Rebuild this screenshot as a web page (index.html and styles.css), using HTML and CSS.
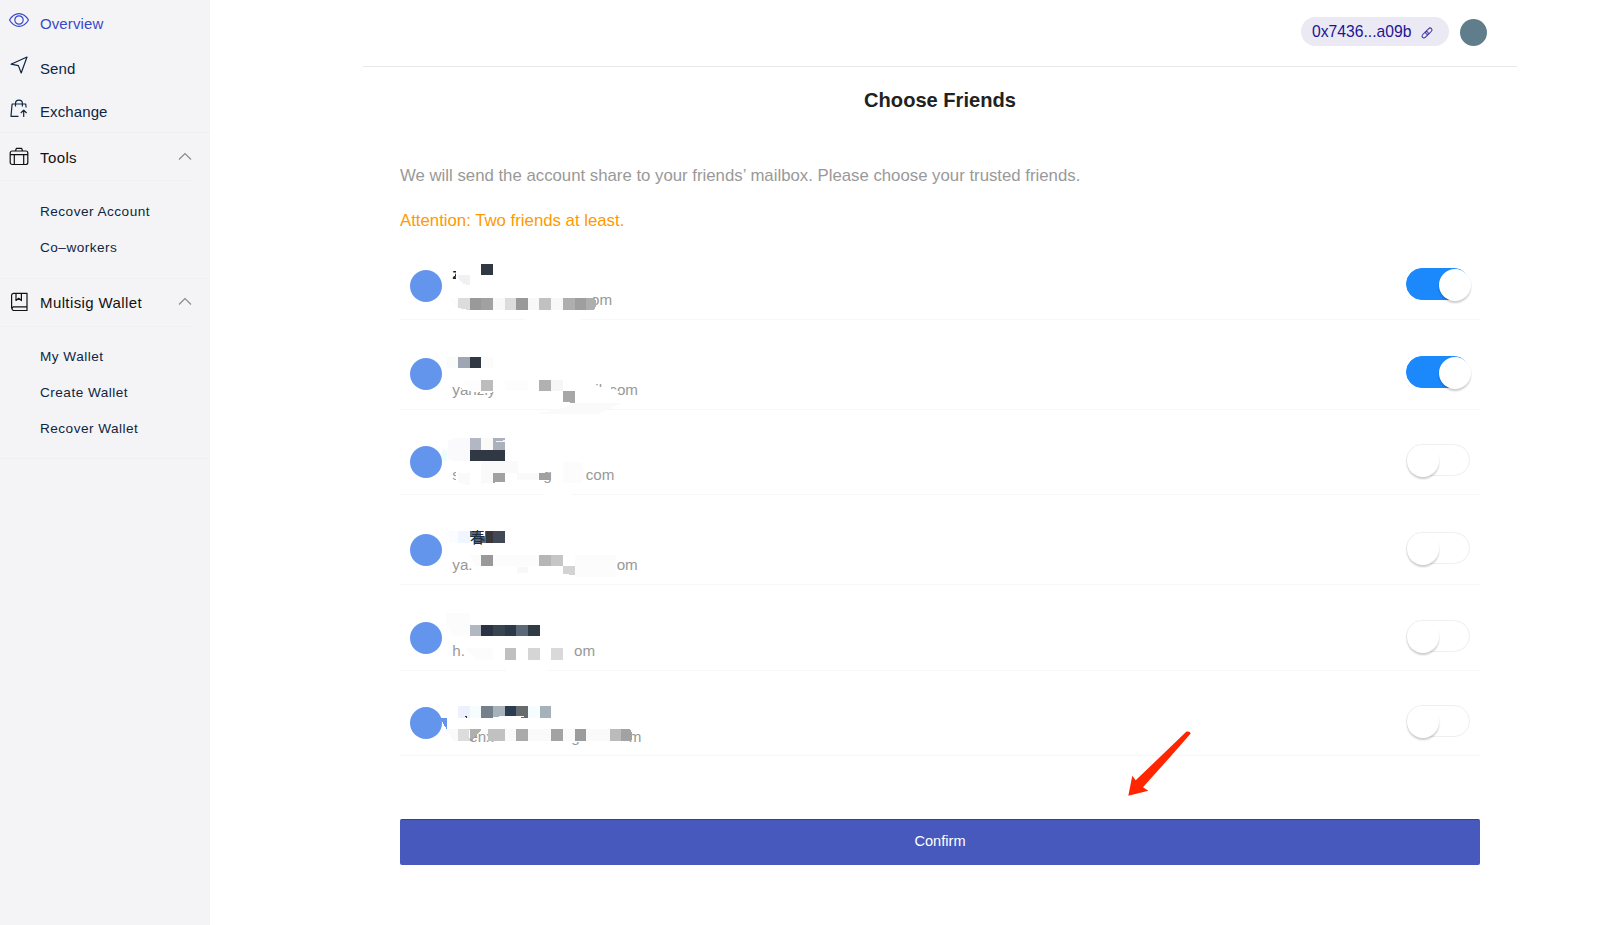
FILE: index.html
```html
<!DOCTYPE html>
<html lang="en">
<head>
<meta charset="utf-8">
<title>Choose Friends</title>
<link rel="stylesheet" href="styles.css">
</head>
<body>
<div class="app">
  <nav class="sidebar">
    <a class="nav-item active">
      <svg class="icon" viewBox="0 0 22 22"><path d="M1.500 10C4 5.800 7.300 3.600 11 3.600S18 5.800 20.500 10C18 14.200 14.700 16.400 11 16.400S4 14.200 1.500 10Z"/><circle cx="11" cy="10" r="4.200"/></svg>
      <span>Overview</span></a>
    <a class="nav-item">
      <svg class="icon" viewBox="0 0 22 22"><path d="M3 9.200 19 2 13.200 18 10.400 10.600Z"/></svg>
      <span>Send</span></a>
    <a class="nav-item exchange">
      <svg class="icon" viewBox="0 0 22 22"><path d="M10.500 18.300H3L4.100 6H17.700L18.100 9.500M7.500 8.500V5.500a3.400 3.400 0 0 1 6.900 0V8.500M15.700 19V12.500M12.800 15l2.900-2.900L18.600 15"/></svg>
      <span>Exchange</span></a>
    <div class="nav-group">
      <svg class="icon" viewBox="0 0 22 22"><rect x="2.200" y="5" width="17.600" height="13.500" rx="2"/><path d="M7.500 5 8.300 2.300h5.400L14.500 5M2.200 8.700H19.800M6.300 8.700V18.500M15.700 8.700V18.500"/></svg>
      <span>Tools</span>
      <svg class="chevron" viewBox="0 0 14 9"><path d="M1 7.500 7 1.500 13 7.500"/></svg>
    </div>
    <div class="sub tools">
      <a>Recover Account</a><a>Co–workers</a>
    </div>
    <div class="nav-group wallet">
      <svg class="icon" viewBox="0 0 22 22"><path d="M19 15.800H5.500a1.900 1.900 0 0 0 0 3.700H19V2.300H5.500A2 2 0 0 0 3.600 4.300V17.500M8 2.300V9.500L10.700 7.300 13.400 9.500V2.300"/></svg>
      <span>Multisig Wallet</span>
      <svg class="chevron" viewBox="0 0 14 9"><path d="M1 7.500 7 1.500 13 7.500"/></svg>
    </div>
    <div class="sub wallets">
      <a>My Wallet</a><a>Create Wallet</a><a>Recover Wallet</a>
    </div>
  </nav>

  <main class="main">
    <header class="topbar">
      <div class="address"><span>0x7436...a09b</span>
        <svg class="link" viewBox="0 0 14 14"><g transform="rotate(-45 7 7)"><rect x="-.300" y="4.800" width="8.600" height="4.400" rx="2.200"/><rect x="5.700" y="4.800" width="8.600" height="4.400" rx="2.200"/></g></svg>
      </div>
      <div class="account"></div>
    </header>
    <section class="content">
      <h1>Choose Friends</h1>
      <p class="lead">We will send the account share to your friends’ mailbox. Please choose your trusted friends.</p>
      <p class="warn">Attention: Two friends at least.</p>
      <ul class="friends">
        <li class="row r1"><span class="avatar"></span>
          <svg class="identity" viewBox="442 231 240 89"><g transform="translate(390 250) scale(.33333)">
            <path fill="#fff" d="M404 200h168v12h-168z"/>
            <text class="name" x="187" y="88">z</text><path fill="#fff" d="M198 60h25v30h-25zM186 68h9v10h-9z"/>
            <text x="603" y="165">om</text>
            <path fill="#f1f1f1" d="M204 75h35v30q-25 0-35-22z"/><path fill="#303844" d="M274 42h35v33h-35z"/>
            <path fill="#fff" d="M595 130h14v50h-14z"/>
            <path fill="#fcfcfc" d="M178 147h26v28z"/><path fill="#dcdcdc" d="M204 145h35v35q-20-1-35-7zM344 145h35v35h-35z"/>
            <path fill="#999" d="M239 145h35v35h-35zM379 145h35v35h-35z"/><path fill="#a1a1a1" d="M274 145h35v35h-35z"/>
            <path fill="#f8f8f8" d="M309 145h35v35h-35zM414 145h34v35h-34zM484 145h35v35h-35z"/><path fill="#c1c1c1" d="M448 145h36v35h-36z"/>
            <path fill="#aeaeae" d="M519 145h35v35h-35zM589 145h25q12 17-2 35h-23z"/><path fill="#9e9e9e" d="M554 145h35v35h-35z"/>
            </g></svg>
          <span class="toggle on"><i></i></span></li>
        <li class="row r2"><span class="avatar"></span>
          <svg class="identity" viewBox="442 320 240 90"><g transform="translate(390 250) scale(.33333)">
            <text x="187" y="436">yanzly</text><text x="658" y="436">com</text><text x="616" y="436">il</text>
            <path fill="#fff" d="M213 398H325V425L290 430 240 424 213 415ZM610 411H650L688 425 680 440H605Z"/>
            <path fill="#fbfbfb" d="M170 320h34v34h-34zM274 320h35v34h-35z"/><path fill="#9fa5b3" d="M204 320h35v34h-35z"/><path fill="#303844" d="M239 320h35v34h-35z"/>
            <path fill="#fdfdfd" d="M215 390h59v34h-32zM344 390h70v34h-70z"/><path fill="#bcbcbc" d="M274 390h35v34h-35z"/><path fill="#b1b1b1" d="M448 390h36v34h-36z"/><path fill="#f6f6f6" d="M484 390h35v34h-35z"/>
            <path fill="#a7a7a7" d="M519 424h35v35l-35-4z"/><path fill="#fafafa" d="M435 493 525 472 554 460H690Q660 475 625 493Z"/>
            </g></svg>
          <span class="toggle on"><i></i></span></li>
        <li class="row r3"><span class="avatar"></span>
          <svg class="identity" viewBox="442 410 240 85"><g transform="translate(390 420) scale(.33333)">
            <path fill="#fff" d="M462 216h83v12h-83z"/>
            <text x="187" y="181">s</text><text x="587" y="181">com</text><text x="460" y="181">g</text><path fill="#fff" d="M198 140h15v50h-15z"/>
            <path fill="#effcfd" d="M155 89h15v35h-15z"/><path fill="#fafafd" d="M175 60l29-6h35v70h-35l-29-4z"/>
            <path fill="#b3b7c3" d="M239 54h35v35h-35z"/><path fill="#fafaf8" d="M274 54h35v35h-35z"/><path fill="#adb1bc" d="M309 54h35v35h-35z"/><path fill="#f4f4f8" d="M315 65l29-4v5z"/><path fill="#303844" d="M239 89h105v35h-105z"/>
            <path fill="#fafafa" d="M274 124h110v35h-75v28l-35 4zM380 159h68v22h-68zM204 160h35v35q-20 0-35-8z"/><path fill="#fcfcfc" d="M519 125h55l12 30-12 35h-55z"/>
            <path fill="#a1a1a1" d="M309 159h35v26l-35 3zM448 159h36v21h-36z"/>
            </g></svg>
          <span class="toggle"><i></i></span></li>
        <li class="row r4"><span class="avatar"></span>
          <svg class="identity" viewBox="442 495 240 90"><g transform="translate(390 420) scale(.33333)">
            <text x="187" y="451">ya.</text><text x="680" y="451">om</text><path fill="#fff" d="M212 415h25v10h-25z"/>
            <path fill="#fbfcff" d="M175 333h29v35h-25z"/><path fill="#eff6ff" d="M204 333h35v35h-35z"/><path fill="#5c6875" d="M239 333h49v35h-49z"/>
            <path fill="#fff" d="M239 352h14v16h-14zM274 333h12v18h-12z"/><text class="glyph" x="240" y="370">春</text>
            <path fill="#383638" d="M288 333h21v35h-21z"/><path fill="#434857" d="M309 333h35v35h-35z"/>
            <path fill="#fcfcfc" d="M239 404h35v34h-20zM309 404h139v34H309zM554 404h124v66H554z"/><path fill="#999" d="M274 404h35v34h-35z"/><path fill="#b6b6b6" d="M448 404h36v34h-36z"/><path fill="#c6c6c6" d="M484 404h35v34h-35z"/><path fill="#d3d3d3" d="M519 438h35v27l-35-3z"/><path fill="#f8f8f8" d="M380 440h34v18h-34z"/>
            </g></svg>
          <span class="toggle"><i></i></span></li>
        <li class="row r5"><span class="avatar"></span>
          <svg class="identity" viewBox="442 585 240 86"><g transform="translate(390 595) scale(.33333)">
            <path fill="#fff" d="M349 220h121v12h-121z"/>
            <text x="187" y="184">h.</text><text x="552" y="184">om</text>
            <path fill="#fcfcfd" d="M168 54h71v70h-50l-21-34z"/><path fill="#b1b8c1" d="M239 89h35v35h-35z"/><path fill="#2a3344" d="M274 89h35v35h-35z"/><path fill="#374550" d="M309 89h35v35h-35z"/><path fill="#2a3a48" d="M344 89h35v35h-35z"/><path fill="#5b6877" d="M379 89h35v35h-35z"/><path fill="#303a44" d="M414 89h35v35h-35z"/>
            <path fill="#fcfcfc" d="M224 159h85v35h-50z"/><path fill="#c0c0c0" d="M344 159h35v35h-35z"/><path fill="#d5d5d5" d="M414 159h35v35h-35z"/><path fill="#d9d9d9" d="M484 159h35v35h-35z"/>
            </g></svg>
          <span class="toggle"><i></i></span></li>
        <li class="row r6"><span class="avatar"></span>
          <svg class="identity" viewBox="440 671 240 85"><g transform="translate(390 595) scale(.33333)">
            <path fill="#6495ed" d="M150 369h20v34z"/>
            <text x="544" y="440">g</text><path fill="#fff" d="M540 400h30v42h-30z"/>
            <path fill="#edf1fb" d="M204 333h35v35h-35z"/><path fill="#f6fdff" d="M239 333h35v35h-35zM414 333h35v35h-35z"/><path fill="#74818a" d="M274 333h35v35h-35z"/><path fill="#a7b3ba" d="M309 333h35v35h-35z"/><path fill="#2c3c52" d="M344 333h35v35h-35z"/><path fill="#666c6e" d="M379 333h35v35h-35z"/><path fill="#a5b2ba" d="M449 333h35v35h-35z"/>
            <path fill="#303844" d="M220 361l10 2v5z"/><path fill="#fff" d="M308 366q40-4 95-2l-14 5h-78z"/>
            <path fill="#fafafa" d="M170 403h556v35H190z"/><path fill="#dcdcdc" d="M204 403h35v35h-35z"/><path fill="#afafaf" d="M239 403h35l-27 35h-8z"/>
            <text x="238" y="440">enx</text><path fill="#fff" d="M238 405h36l-18 20-18 3z"/><path fill="#afafaf" d="M239 403h36l-28 30h-8z"/>
            <path fill="#c1c1c1" d="M294 403h50v35h-50z"/><path fill="#aaa" d="M379 403h35v35h-35z"/><path fill="#a3a3a3" d="M484 403h35v35h-35z"/><path fill="#9c9c9c" d="M554 403h35v35h-35z"/><text x="716" y="440">m</text><path fill="#bbb" d="M659 403h35v35h-35z"/><path fill="#a2a2a2" d="M694 403h27q10 17 3 35h-30z"/>
            </g></svg>
          <span class="toggle"><i></i></span></li>
      </ul>
      <button class="confirm">Confirm</button>
    </section>
  </main>
  <svg class="arrow" viewBox="0 0 64 66"><path d="M.300 64.700 4.300 44.700 7.700 49.300 58.500.600Q62-.300 62.700 2.600L43 25 15 56.300 20.300 59.700Z"/></svg>
</div>
</body>
</html>
```

FILE: styles.css
```css
* { box-sizing: border-box; }
body { margin: 0; background: #fff; font-family: "Liberation Sans", Arial, "Noto Sans CJK SC", sans-serif; }
.app { position: relative; display: flex; width: 1600px; height: 925px; overflow: hidden; }

.sidebar { width: 210px; flex: none; background: #f4f4f7; color: #0d2642; font-size: 15px; letter-spacing: .1px; }
.nav-item { display: flex; align-items: center; height: 44.5px; padding: 3px 0 0 8px; gap: 10px; white-space: nowrap; }
.nav-item.exchange { height: 44px; padding-top: 2px; }
.nav-item .icon { margin-top: -5px; }
.active { color: #3949c8; }
.icon { width: 22px; height: 22px; flex: none; fill: none; stroke: currentColor; stroke-width: 1.2; stroke-linejoin: round; }
.nav-group { display: flex; align-items: center; height: 48px; margin-right: 17px; padding: 2px 0 0 8px; gap: 10px; color: #111; border-bottom: 1px solid #f0f0f3; letter-spacing: .4px; }
.nav-group .icon { margin-top: -2px; }
.nav-group.wallet { height: 48px; padding-top: 0; }
.chevron { width: 14px; height: 9px; margin: -3px 1px 0 auto; fill: none; stroke: #888; stroke-width: 1.1; }
.nav-group.wallet .chevron { margin-top: -2px; }
.exchange, .sub { border-bottom: 1px solid #efeff2; }
.sub { display: flex; flex-direction: column; padding: 13px 0 0 40px; font-size: 13.6px; letter-spacing: .48px; }
.sub a { height: 35.8px; line-height: 35.8px; white-space: nowrap; }
.tools { height: 98px; }
.wallets { height: 132px; padding-top: 12px; }

.main { width: 1154px; margin-left: 153px; flex: none; }
.topbar { display: flex; justify-content: flex-end; align-items: flex-start; gap: 11px; height: 67px; padding: 17px 30px 0 0; border-bottom: 1px solid #e8e8ea; }
.address { display: flex; align-items: center; gap: 10px; width: 148px; height: 29px; padding-left: 11px; border-radius: 15px; background: #eae9f4; color: #1e1594; font-size: 15.7px; }
.link { width: 12px; height: 12px; margin-top: 3px; overflow: visible; fill: none; stroke: #3d369f; stroke-width: 1.2; }
.account { width: 27px; height: 27px; margin-top: 2px; border-radius: 50%; background: #607d8b; }

.content { padding: 0 37px; }
h1 { height: 64px; margin: 0; padding-top: 21px; font-size: 20.1px; line-height: 24px; text-align: center; color: #212121; }
p { margin: 0; font-size: 16.77px; white-space: nowrap; }
.lead { height: 67px; padding-top: 35px; line-height: 20px; color: #999; }
.warn { height: 33px; padding-top: 13px; line-height: 20px; color: #f90; }
.friends { margin: 0; padding: 0; list-style: none; }
.row { display: flex; align-items: flex-start; box-shadow: inset 0 -1px #f7f7f7; padding-right: 10px; }
.avatar { width: 32px; height: 32px; margin: var(--top) 0 0 10px; flex: none; border-radius: 50%; background: #6495ed; }
.identity { width: 240px; height: 100%; overflow: visible; }
.identity path { shape-rendering: crispEdges; }
.identity text { font-size: 45.6px; fill: #999; }
.identity .name { font-weight: bold; fill: #0d2642; font-size: 44px; }
.identity .glyph { font-family: "Noto Sans CJK SC", sans-serif; font-size: 46px; fill: #1b3046; }
.r1 { height: 89px; --top: 39px; }
.r2 { height: 90px; --top: 38px; }
.r3 { height: 85px; --top: 36px; }
.r4 { height: 90px; --top: 39px; }
.r5 { height: 86px; --top: 37px; }
.r6 { height: 85px; --top: 36px; }
.r6 .identity { margin-left: -2px; }
.toggle { display: flex; width: 64px; height: 32px; margin: calc(var(--top) - 2px) 0 0 auto; border: 1px solid #efefef; border-radius: 16px; }
.toggle i { width: 32px; height: 32px; flex: none; border-radius: 50%; background: #fff; box-shadow: 0 2px 2px rgba(0,0,0,.2); }
.on { background: #1b88fb; border-color: #1b88fb; }
.on i { margin-left: 32px; }
.confirm { display: block; width: 1080px; height: 46px; margin-top: 63px; padding: 0 0 3px; border: 0; border-top: 1px solid #2c42a8; border-radius: 2px; background: #4759bd; color: #fff; font-family: inherit; font-size: 14.6px; }
.arrow { position: absolute; left: 1128px; top: 731px; width: 64px; height: 66px; fill: #ff2600; }
```
